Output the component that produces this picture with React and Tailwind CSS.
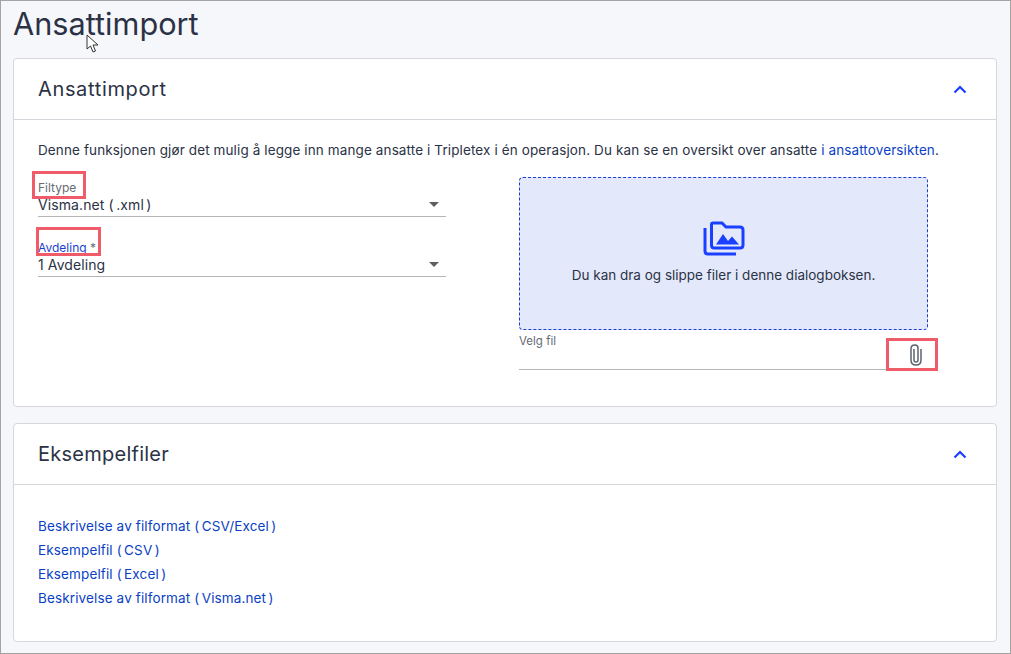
const links = [
  'Beskrivelse av filformat (CSV/Excel)',
  'Eksempelfil (CSV)',
  'Eksempelfil (Excel)',
  'Beskrivelse av filformat (Visma.net)',
];

// the parens sit a bit away from their content in the reference font
const Parens = ({ text }) => {
  const [, before, inside] = text.match(/^(.*)\((.*)\)$/);
  return (
    <>
      {before}(<span className="px-[2.4px]">{inside}</span>)
    </>
  );
};

const ChevronUp = () => (
  <svg width="14" height="9" viewBox="0 0 14 9" fill="none" stroke="#1a3fff" strokeWidth="2.2">
    <path d="M1.5 7.5 L7 2 L12.5 7.5" />
  </svg>
);

const Caret = () => (
  <span className="mr-[7px] h-0 w-0 border-x-[5px] border-t-[5px] border-x-transparent border-t-[#5f5f5f]" />
);

const CardHeader = ({ title, tracking }) => (
  <div className="flex h-[61px] items-center justify-between border-b border-[#d5d7dc] pl-6 pr-[29px]">
    <h2 className={`text-[20px] text-[#2b3245] ${tracking}`}>{title}</h2>
    <ChevronUp />
  </div>
);

const Select = ({ label, required, value, active, boxClass }) => (
  <div className="relative">
    <div className={`text-[12px] leading-[14px] ${active ? 'text-[#1a3fd0]' : 'text-[#666b75]'}`}>
      {label}
      {required && <span className="text-[#666b75]"> *</span>}
    </div>
    <div className="flex h-[22px] items-center justify-between border-b border-[#b5b5b5] pb-[3px] text-[14px] tracking-[0.1px] text-[#2b3245]">
      <span>{value}</span>
      <Caret />
    </div>
    <div className={`absolute border-[3px] border-[#ef5b69] ${boxClass}`} />
  </div>
);

export default function App() {
  return (
    <div
      className="flex h-[654px] w-[1011px] flex-col border border-[#a3a3a3] bg-[#f6f7fb] pl-3 pr-[13px]"
      style={{ fontFamily: 'Inter, "Noto Sans", sans-serif' }}
    >
      <h1 className="relative mt-[3px] h-[54px] text-[30.7px] leading-10 text-[#2b3245]">
        Ansattimport
        <svg className="absolute left-[73px] top-[30px]" width="14" height="20" viewBox="0 0 14 20" fill="#fff" stroke="#333" strokeWidth="1">
          <path d="M1 1 L1 15 L4.5 12 L7 18 L9.5 17 L7 11 L12 11 Z" />
        </svg>
      </h1>

      <section className="h-[349px] rounded border border-[#d5d7dc] bg-white">
        <CardHeader title="Ansattimport" tracking="tracking-[0.65px]" />
        <div className="px-6">
          <p className="mt-[20px] text-[13.5px] leading-5 tracking-[0.115px] text-[#2b3245]">
            Denne funksjonen gjør det mulig å legge inn mange ansatte i Tripletex i én operasjon. Du kan se en oversikt over ansatte{' '}
            <a className="text-[#0b3fc4]">i ansattoversikten</a>.
          </p>
          <div className="mt-[17px] flex">
            <div className="flex w-[408px] flex-col gap-[24px] pt-[4px]">
              <Select label="Filtype" value={<Parens text="Visma.net (.xml)" />} boxClass="-left-1.5 -top-[10px] h-[28px] w-[54px]" />
              <Select label="Avdeling" required value="1 Avdeling" active boxClass="-left-0.5 -top-[14px] h-[29px] w-[65px]" />
            </div>
            <div className="ml-[73px] w-[409px]">
              <div className="flex h-[153px] flex-col items-center justify-center rounded border border-dashed border-[#1a3fd0] bg-[#e3e9fb]">
                <svg width="42" height="36" viewBox="0 0 42 36" fill="none">
                  <path d="M2 7 V30 Q2 33 5 33 H33" stroke="#1a3fff" strokeWidth="3" />
                  <path d="M8.5 3.5 Q8.5 2 10 2 H19 L23 6 H37 Q40 6 40 9 V24 Q40 27 37 27 H11 Q8.5 27 8.5 24 Z" stroke="#1a3fff" strokeWidth="3" />
                  <path d="M13 23.5 L20 13 L25 20 L29 15.5 L36 23.5 Z" fill="#1a3fff" />
                </svg>
                <p className="mt-[8px] text-[13.5px] text-[#2b3245]">Du kan dra og slippe filer i denne dialogboksen.</p>
              </div>
              <div className="relative mt-[4px] h-[36px] border-b border-[#b5b5b5]">
                <div className="text-[11.5px] leading-[14px] text-[#666b75]">Velg fil</div>
                <div className="absolute -bottom-[2px] -right-[10px] flex h-[33px] w-[52px] items-center justify-center border-[3px] border-[#ef5b69] bg-white pl-[7px]">
                  <svg width="14" height="22" viewBox="0 0 14 22" fill="none" stroke="#5c6470" strokeWidth="1.5">
                    <path d="M5 5 V16 Q5 18 7 18 Q9 18 9 16 V4 Q9 1 6 1 Q2 1 2 4.5 V16 Q2 21 7 21 Q12 21 12 16 V5" />
                  </svg>
                </div>
              </div>
            </div>
          </div>
        </div>
      </section>

      <section className="mt-4 h-[219px] rounded border border-[#d5d7dc] bg-white">
        <CardHeader title="Eksempelfiler" tracking="tracking-[0.25px]" />
        <ul className="mt-[29px] flex flex-col pl-6 text-[13.5px] leading-6 tracking-[0.13px] text-[#0b3fc4]">
          {links.map((link) => (
            <li key={link}><a><Parens text={link} /></a></li>
          ))}
        </ul>
      </section>
    </div>
  );
}
